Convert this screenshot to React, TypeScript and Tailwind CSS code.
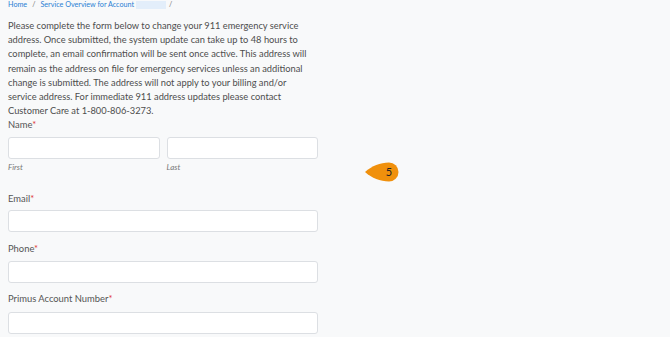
import React from 'react';

const Label = ({ text }: { text: string }) => (
    <div className="text-[9.4px] leading-[14px] text-[#555]">
        {text}
        <span className="text-[#e03c3c]">*</span>
    </div>
);

const Field = () => (
    <input
        type="text"
        className="block w-full h-[22px] bg-white border border-[#dcdfe3] rounded-[3px] focus:outline-none"
    />
);

export default function App() {
    return (
        <div
            className="relative w-[670px] h-[337px] overflow-hidden bg-[#f8f9fa]"
            style={{ fontFamily: 'Lato, "Open Sans", sans-serif' }}
        >
            <div className="px-2">
                {/* breadcrumb */}
                <div className="flex items-center h-[10px] text-[7.2px] leading-[10px] text-[#2a7fd4]">
                    <span>Home</span>
                    <span className="mx-[5px] text-[#777]">/</span>
                    <span>Service Overview for Account</span>
                    <span className="ml-[2px] w-[30px] h-[8px] bg-[#e3eefa]" />
                    <span className="ml-[3px] text-[#777]">/</span>
                </div>

                <p className="mt-[9px] w-[301px] text-[9.3px] leading-[14.2px] text-[#4d4d4d]">
                    Please complete the form below to change your 911 emergency service address. Once submitted, the
                    system update can take up to 48 hours to complete, an email confirmation will be sent once active.
                    This address will remain as the address on file for emergency services unless an additional change
                    is submitted. The address will not apply to your billing and/or service address. For immediate 911
                    address updates please contact Customer Care at 1-800-806-3273.
                </p>

                <div className="w-[310px]">
                    <Label text="Name" />
                    <div className="mt-[5px] flex gap-[7px]">
                        <div className="flex-1">
                            <Field />
                            <div className="mt-[1px] text-[8px] leading-[14px] italic text-[#777]">First</div>
                        </div>
                        <div className="flex-1">
                            <Field />
                            <div className="mt-[1px] text-[8px] leading-[14px] italic text-[#777]">Last</div>
                        </div>
                    </div>

                    <div className="mt-[18px]">
                        <Label text="Email" />
                        <div className="mt-[4px]"><Field /></div>
                    </div>
                    <div className="mt-[10px]">
                        <Label text="Phone" />
                        <div className="mt-[5px]"><Field /></div>
                    </div>
                    <div className="mt-[9px]">
                        <Label text="Primus Account Number" />
                        <div className="mt-[6px]"><Field /></div>
                    </div>
                </div>
            </div>

            {/* step badge */}
            <div className="absolute left-[364px] top-[162px] w-[36px] h-[20px]">
                <svg width="36" height="20" viewBox="0 0 36 20" className="absolute inset-0">
                    <path d="M1 10 C 8 4, 16 0.5, 25 0.5 A 9.5 9.5 0 0 1 25 19.5 C 16 19.5, 8 16, 1 10 Z" fill="#f0900c" />
                </svg>
                <span className="absolute left-[16px] top-0 w-[18px] h-[20px] flex items-center justify-center text-[11px] text-[#222]">
                    5
                </span>
            </div>
        </div>
    );
}
